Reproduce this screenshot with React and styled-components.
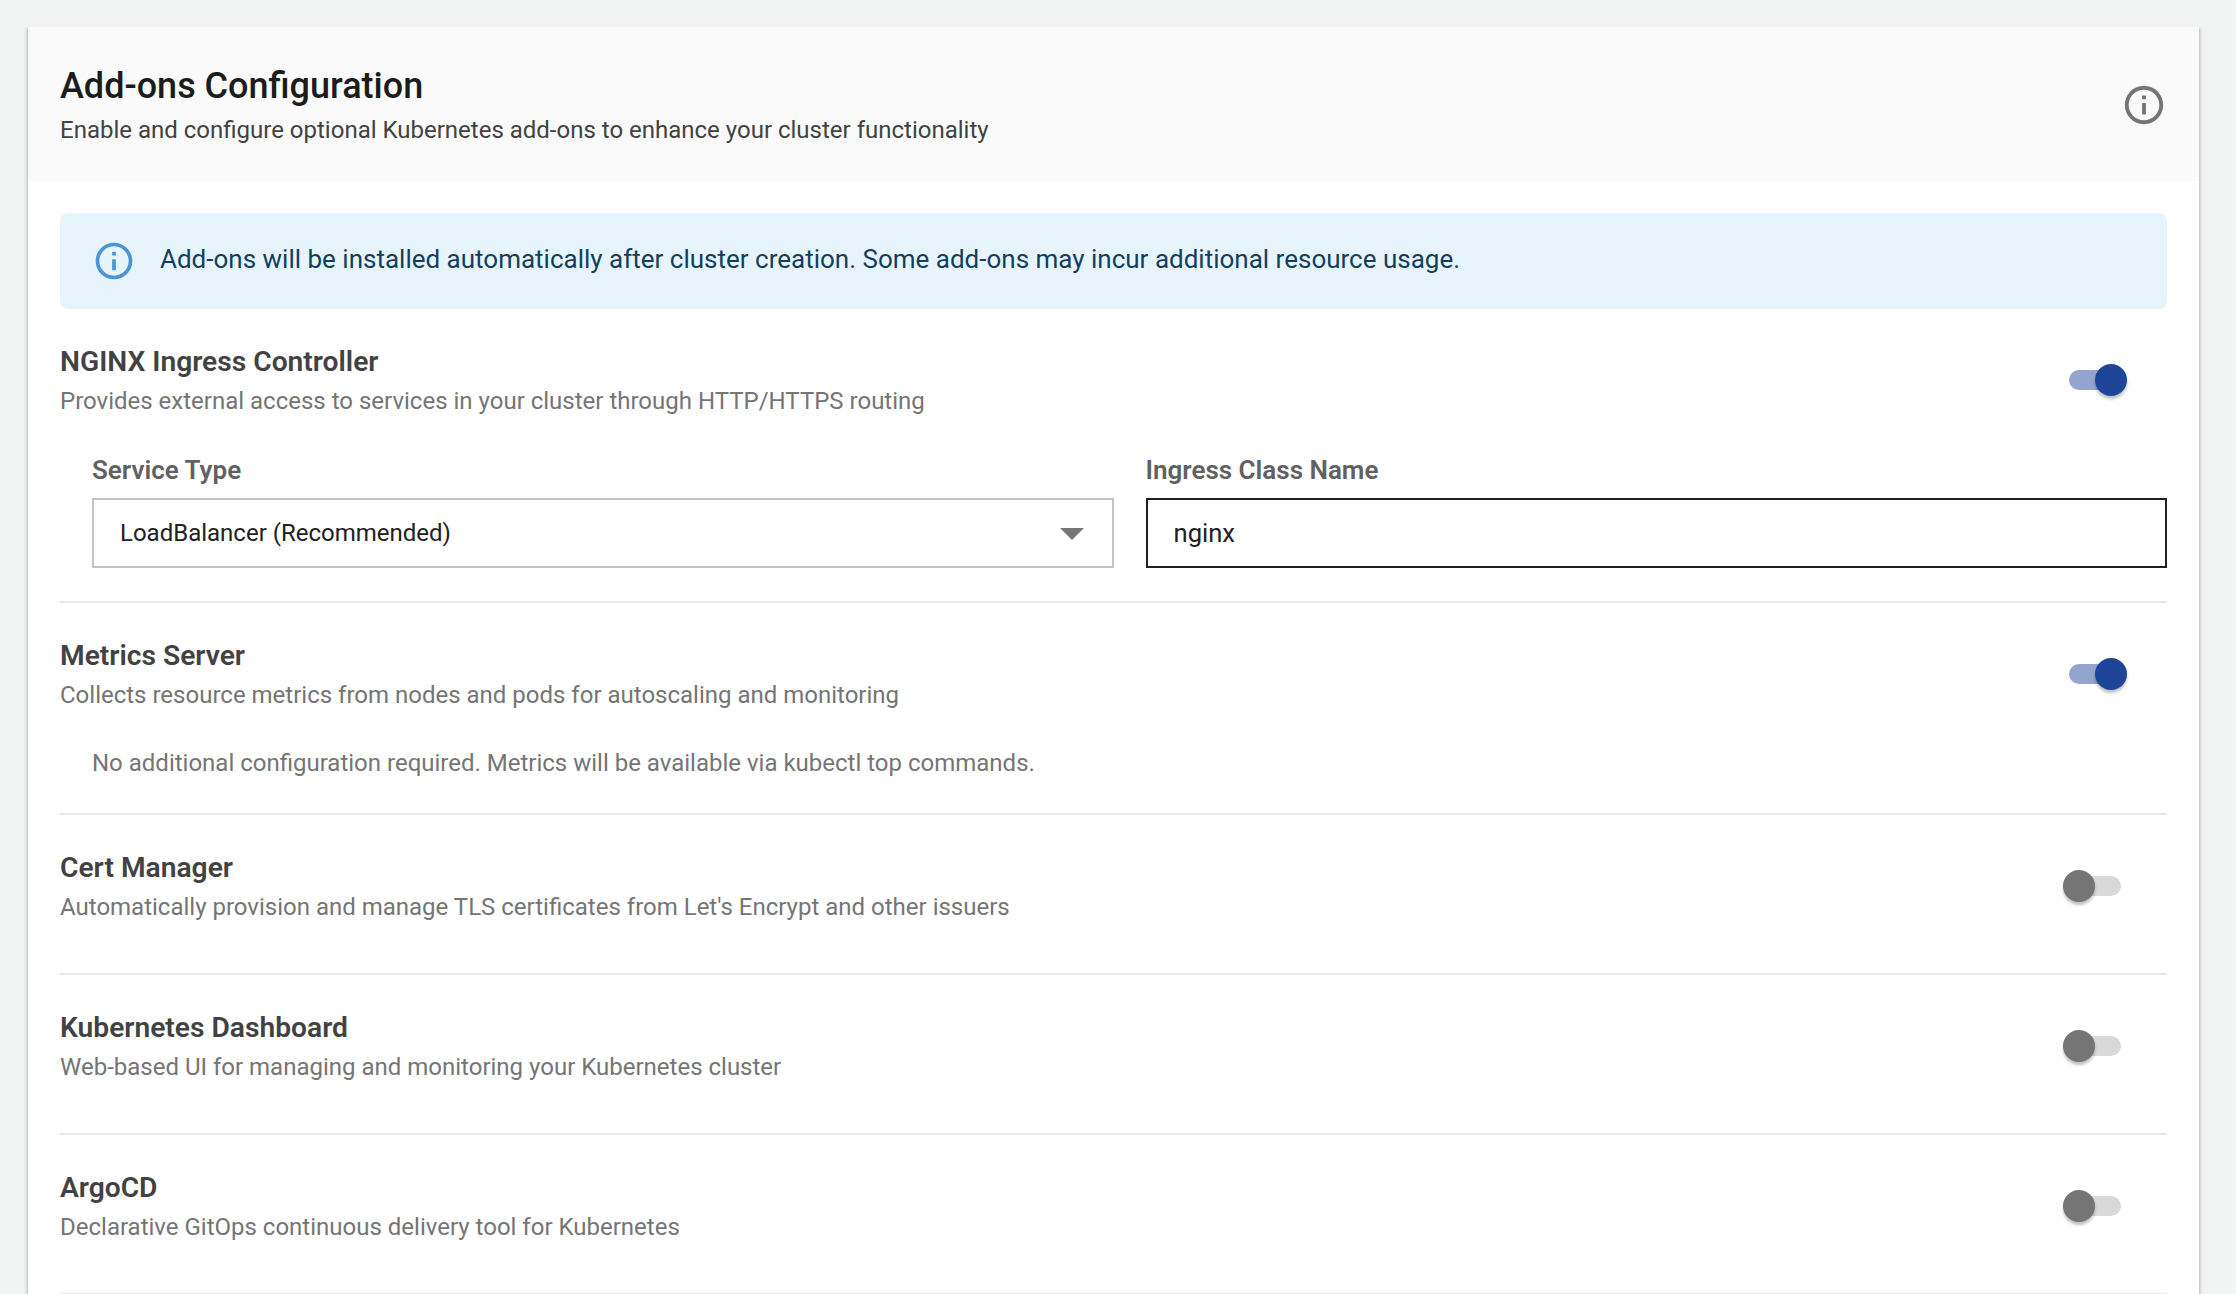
import React from 'react'
import styled, { createGlobalStyle } from 'styled-components'

const GlobalStyle = createGlobalStyle`
  html, body {
    margin: 0;
    height: 1294px;
    overflow: hidden;
    background: #f2f4f4;
    font-family: Roboto, "Liberation Sans", sans-serif;
  }
`

const Page = styled.div`
  padding: 27px 37px 0 28px;
`

const Card = styled.div`
  background: #fff;
  box-shadow: 0 1px 4px rgba(0, 0, 0, 0.4);
  clip-path: inset(0 -8px 0 -8px);
`

const CardHeader = styled.header`
  height: 154px;
  box-sizing: border-box;
  background: #fafafa;
  display: flex;
  align-items: center;
  justify-content: space-between;
  padding: 2px 32px 0 32px;
`

const Title = styled.h2`
  margin: 0;
  font-size: 36px;
  line-height: 46px;
  font-weight: 500;
  color: #1c1c1c;
`

const Subtitle = styled.p`
  margin: 4px 0 0 0;
  font-size: 24px;
  line-height: 34px;
  color: #424242;
`

const CardBody = styled.div`
  padding: 32px 32px 40px 32px;
`

const Banner = styled.div`
  height: 96px;
  box-sizing: border-box;
  background: #e8f4fc;
  border-radius: 8px;
  display: flex;
  align-items: center;
  gap: 24px;
  padding: 0 32px;
  margin-bottom: 32px;
  font-size: 26px;
  color: #123f60;
`

const BannerText = styled.span`
  margin-bottom: 4px;
`

const Icon = styled.svg`
  width: ${props => props.$size}px;
  height: ${props => props.$size}px;
  fill: ${props => props.$color};
  flex: none;
`

const Addon = styled.section`
  padding: ${props => (props.$first ? '0' : '32px')} 0 ${props => props.$bottom}px 0;
  border-bottom: 2px solid #e8e8e8;
`

const AddonHeader = styled.div`
  display: flex;
  align-items: center;
  justify-content: space-between;
`

const AddonName = styled.h3`
  margin: 0;
  font-size: 28.2px;
  line-height: 41px;
  font-weight: 600;
  color: #424242;
`

const AddonDesc = styled.p`
  margin: 0;
  padding-bottom: 2px;
  font-size: 24px;
  line-height: 38px;
  color: #757575;
`

const Switch = styled.span`
  position: relative;
  display: block;
  width: 52px;
  height: 20px;
  margin: 0 46px 3px 0;
  border-radius: 10px;
  background: ${props => (props.$on ? '#93a4cf' : '#d9d9d9')};
`

const Thumb = styled.span`
  position: absolute;
  top: -6px;
  left: ${props => (props.$on ? '26px' : '-6px')};
  width: 32px;
  height: 32px;
  border-radius: 50%;
  background: ${props => (props.$on ? '#1e4598' : '#757575')};
  box-shadow: 0 3px 3px rgba(0, 0, 0, 0.25);
`

const Config = styled.div`
  display: grid;
  grid-template-columns: 1fr 1fr;
  column-gap: 32px;
  padding-left: 32px;
  margin-top: 30px;
`

const Field = styled.div`
  display: flex;
  flex-direction: column;
  gap: 10px;
`

const FieldLabel = styled.label`
  font-size: 26px;
  line-height: 36px;
  font-weight: 600;
  color: #616161;
`

const SelectBox = styled.div`
  height: 70px;
  box-sizing: border-box;
  border: 2px solid #c4c4c4;
  display: flex;
  align-items: center;
  justify-content: space-between;
  padding: 0 28px 0 26px;
  font-size: 24px;
  color: #212121;
`

const TextInput = styled.input`
  height: 70px;
  box-sizing: border-box;
  border: 2px solid #212121;
  border-radius: 0;
  outline: none;
  padding: 0 26px;
  font: inherit;
  font-size: 25.6px;
  color: #212121;
`

const Caret = styled.svg`
  width: 24px;
  height: 12px;
  margin-top: 2px;
  fill: #757575;
`

const Note = styled.p`
  margin: 27px 0 0 32px;
  font-size: 24px;
  line-height: 40px;
  color: #757575;
`

const infoPath =
  'M11 7h2v2h-2zm0 4h2v6h-2zm1-9C6.48 2 2 6.48 2 12s4.48 10 10 10 10-4.48 10-10S17.52 2 12 2zm0 18c-4.41 0-8-3.59-8-8s3.59-8 8-8 8 3.59 8 8-3.59 8-8 8z'

const InfoIcon = ({ size, color }) =>
  <Icon viewBox="0 0 24 24" $size={size} $color={color}>
    <path d={infoPath} />
  </Icon>

const Toggle = ({ on }) =>
  <Switch $on={on}>
    <Thumb $on={on} />
  </Switch>

const AddonRow = ({ name, desc, on, first, bottom = 45, children }) =>
  <Addon $first={first} $bottom={bottom}>
    <AddonHeader>
      <div>
        <AddonName>{name}</AddonName>
        <AddonDesc>{desc}</AddonDesc>
      </div>
      <Toggle on={on} />
    </AddonHeader>
    {children}
  </Addon>

export default () =>
  <Page>
    <GlobalStyle />
    <Card>
      <CardHeader>
        <div>
          <Title>Add-ons Configuration</Title>
          <Subtitle>Enable and configure optional Kubernetes add-ons to enhance your cluster functionality</Subtitle>
        </div>
        <InfoIcon size={46} color="#757575" />
      </CardHeader>
      <CardBody>
        <Banner>
          <InfoIcon size={44} color="#4a94d8" />
          <BannerText>Add-ons will be installed automatically after cluster creation. Some add-ons may incur additional resource usage.</BannerText>
        </Banner>
        <AddonRow
          first
          on
          bottom={33}
          name="NGINX Ingress Controller"
          desc="Provides external access to services in your cluster through HTTP/HTTPS routing"
        >
          <Config>
            <Field>
              <FieldLabel>Service Type</FieldLabel>
              <SelectBox>
                LoadBalancer (Recommended)
                <Caret viewBox="0 0 24 12"><path d="M0 0h24L12 12z" /></Caret>
              </SelectBox>
            </Field>
            <Field>
              <FieldLabel>Ingress Class Name</FieldLabel>
              <TextInput value="nginx" readOnly />
            </Field>
          </Config>
        </AddonRow>
        <AddonRow
          on
          bottom={30}
          name="Metrics Server"
          desc="Collects resource metrics from nodes and pods for autoscaling and monitoring"
        >
          <Note>No additional configuration required. Metrics will be available via kubectl top commands.</Note>
        </AddonRow>
        <AddonRow
          name="Cert Manager"
          desc="Automatically provision and manage TLS certificates from Let's Encrypt and other issuers"
        />
        <AddonRow
          name="Kubernetes Dashboard"
          desc="Web-based UI for managing and monitoring your Kubernetes cluster"
        />
        <AddonRow
          name="ArgoCD"
          desc="Declarative GitOps continuous delivery tool for Kubernetes"
        />
      </CardBody>
    </Card>
  </Page>
